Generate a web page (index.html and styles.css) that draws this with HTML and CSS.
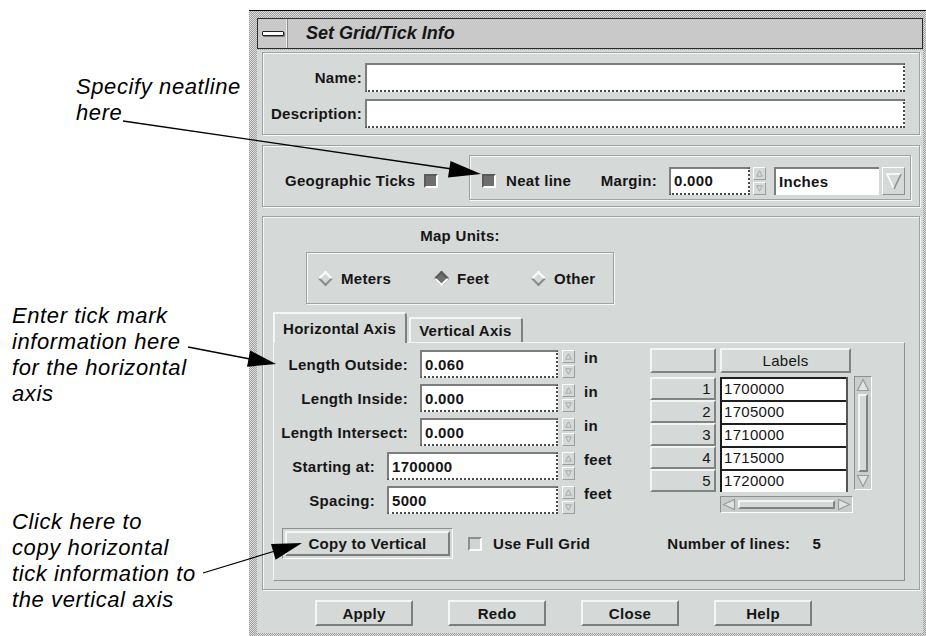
FILE: index.html
```html
<!DOCTYPE html>
<html lang="en">
  <head>
    <meta charset="UTF-8" />
    <title>Set Grid/Tick Info</title>
    <link rel="stylesheet" href="styles.css">
  </head>
  <body>
    <div class="page">
      <div class="notes">
        <p class="note note-neat">Specify neatline<br />here</p>
        <p class="note note-tick">
          Enter tick mark<br />information here<br />for the horizontal<br />axis
        </p>
        <p class="note note-copy">
          Click here to<br />copy horizontal<br />tick information to<br />the vertical axis
        </p>
      </div>

      <div class="window">
        <div class="titlebar">
          <span class="menu-btn"><span class="menu-bar"></span></span>
          <span class="title">Set Grid/Tick Info</span>
        </div>

        <div class="client">
          <div class="panel names">
            <div class="field-row">
              <span class="lbl">Name:</span>
              <span class="text-field"></span>
            </div>
            <div class="field-row">
              <span class="lbl">Description:</span>
              <span class="text-field"></span>
            </div>
          </div>

          <div class="panel ticks">
            <div class="geo">
              <span>Geographic Ticks</span>
              <span class="check on"></span>
            </div>
            <div class="etched neat-box">
              <span class="check on"></span>
              <span class="neat-lbl">Neat line</span>
              <span class="margin-lbl">Margin:</span>
              <span class="text-field margin-field">0.000</span>
              <span class="spin">
                <span class="spin-btn"><svg width="7" height="7" viewBox="0 0 7 7"><path class="spin-tri" d="M3.5 0.8 L6.3 6.2 H0.7 Z" /></svg></span>
                <span class="spin-btn"><svg width="7" height="7" viewBox="0 0 7 7"><path class="spin-tri" d="M0.7 0.8 H6.3 L3.5 6.2 Z" /></svg></span>
              </span>
              <span class="combo">
                <span class="combo-field">Inches</span>
                <span class="combo-arrow">
                  <svg width="18" height="22" viewBox="0 0 18 22">
                    <path d="M9 19 L2 4 H16" fill="none" stroke="#ffffff" stroke-width="1.6" />
                    <path d="M16 4 L9 19" fill="none" stroke="#8d918f" stroke-width="1.6" />
                  </svg>
                </span>
              </span>
            </div>
          </div>

          <div class="panel axes">
            <div class="units">
              <div class="units-title">Map Units:</div>
              <div class="etched radio-box">
                <span class="radio radio-meters"><span class="dia-wrap"><span class="diamond"></span></span>Meters</span>
                <span class="radio radio-feet"><span class="dia-wrap"><span class="diamond on"></span></span>Feet</span>
                <span class="radio"><span class="dia-wrap"><span class="diamond"></span></span>Other</span>
              </div>
            </div>

            <div class="tabs">
              <span class="tab active">Horizontal Axis</span>
              <span class="tab">Vertical Axis</span>
            </div>

            <div class="tab-page">
              <div class="tab-top">
                <div class="form">
                  <div class="form-row">
                    <span class="lbl lbl-a">Length Outside:</span>
                    <span class="text-field in-a">0.060</span>
                    <span class="spin">
                      <span class="spin-btn"><svg width="7" height="7" viewBox="0 0 7 7"><path class="spin-tri" d="M3.5 0.8 L6.3 6.2 H0.7 Z" /></svg></span>
                      <span class="spin-btn"><svg width="7" height="7" viewBox="0 0 7 7"><path class="spin-tri" d="M0.7 0.8 H6.3 L3.5 6.2 Z" /></svg></span>
                    </span>
                    <span class="unit">in</span>
                  </div>
                  <div class="form-row">
                    <span class="lbl lbl-a">Length Inside:</span>
                    <span class="text-field in-a">0.000</span>
                    <span class="spin">
                      <span class="spin-btn"><svg width="7" height="7" viewBox="0 0 7 7"><path class="spin-tri" d="M3.5 0.8 L6.3 6.2 H0.7 Z" /></svg></span>
                      <span class="spin-btn"><svg width="7" height="7" viewBox="0 0 7 7"><path class="spin-tri" d="M0.7 0.8 H6.3 L3.5 6.2 Z" /></svg></span>
                    </span>
                    <span class="unit">in</span>
                  </div>
                  <div class="form-row">
                    <span class="lbl lbl-a">Length Intersect:</span>
                    <span class="text-field in-a">0.000</span>
                    <span class="spin">
                      <span class="spin-btn"><svg width="7" height="7" viewBox="0 0 7 7"><path class="spin-tri" d="M3.5 0.8 L6.3 6.2 H0.7 Z" /></svg></span>
                      <span class="spin-btn"><svg width="7" height="7" viewBox="0 0 7 7"><path class="spin-tri" d="M0.7 0.8 H6.3 L3.5 6.2 Z" /></svg></span>
                    </span>
                    <span class="unit">in</span>
                  </div>
                  <div class="form-row">
                    <span class="lbl lbl-b">Starting at:</span>
                    <span class="text-field in-b">1700000</span>
                    <span class="spin">
                      <span class="spin-btn"><svg width="7" height="7" viewBox="0 0 7 7"><path class="spin-tri" d="M3.5 0.8 L6.3 6.2 H0.7 Z" /></svg></span>
                      <span class="spin-btn"><svg width="7" height="7" viewBox="0 0 7 7"><path class="spin-tri" d="M0.7 0.8 H6.3 L3.5 6.2 Z" /></svg></span>
                    </span>
                    <span class="unit">feet</span>
                  </div>
                  <div class="form-row">
                    <span class="lbl lbl-b">Spacing:</span>
                    <span class="text-field in-b">5000</span>
                    <span class="spin">
                      <span class="spin-btn"><svg width="7" height="7" viewBox="0 0 7 7"><path class="spin-tri" d="M3.5 0.8 L6.3 6.2 H0.7 Z" /></svg></span>
                      <span class="spin-btn"><svg width="7" height="7" viewBox="0 0 7 7"><path class="spin-tri" d="M0.7 0.8 H6.3 L3.5 6.2 Z" /></svg></span>
                    </span>
                    <span class="unit">feet</span>
                  </div>
                </div>

                <div class="table">
                  <div class="table-head">
                    <span class="raised-cell corner"></span>
                    <span class="raised-cell col-head">Labels</span>
                  </div>
                  <div class="table-body">
                    <div class="row-heads">
                      <span class="raised-cell row-head">1</span>
                      <span class="raised-cell row-head">2</span>
                      <span class="raised-cell row-head">3</span>
                      <span class="raised-cell row-head">4</span>
                      <span class="raised-cell row-head">5</span>
                    </div>
                    <div class="cells">
                      <span class="cell">1700000</span>
                      <span class="cell">1705000</span>
                      <span class="cell">1710000</span>
                      <span class="cell">1715000</span>
                      <span class="cell">1720000</span>
                    </div>
                    <div class="vscroll">
                      <span class="sb-arrow"><svg width="14" height="14" viewBox="0 0 14 14"><path class="sb-tri" d="M7 1.5 L12.5 12.5 H1.5 Z" /></svg></span>
                      <span class="sb-thumb"></span>
                      <span class="sb-arrow"><svg width="14" height="14" viewBox="0 0 14 14"><path class="sb-tri" d="M1.5 1.5 H12.5 L7 12.5 Z" /></svg></span>
                    </div>
                  </div>
                  <div class="hscroll">
                    <span class="sb-arrow"><svg width="14" height="13" viewBox="0 0 14 13"><path class="sb-tri" d="M1.5 6.5 L12.5 1.5 V11.5 Z" /></svg></span>
                    <span class="sb-thumb"></span>
                    <span class="sb-arrow"><svg width="14" height="13" viewBox="0 0 14 13"><path class="sb-tri" d="M12.5 6.5 L1.5 1.5 V11.5 Z" /></svg></span>
                  </div>
                </div>
              </div>

              <div class="tab-bottom">
                <span class="default-frame"><span class="btn copy-btn">Copy to Vertical</span></span>
                <span class="check full-check"></span>
                <span class="full-lbl">Use Full Grid</span>
                <span class="num-lbl">Number of lines:</span>
                <span class="num-val">5</span>
              </div>
            </div>
          </div>

          <div class="actions">
            <span class="btn">Apply</span>
            <span class="btn">Redo</span>
            <span class="btn">Close</span>
            <span class="btn">Help</span>
          </div>
        </div>
      </div>

      <svg class="arrows" width="926" height="636" viewBox="0 0 926 636">
        <line x1="123" y1="121" x2="452" y2="169" stroke="#000" stroke-width="1.3" />
        <polygon points="481,174 448,177.5 450.5,161" />
        <line x1="188" y1="347" x2="250" y2="359" stroke="#000" stroke-width="1.3" />
        <polygon points="276,364 247,366.8 250.2,350.6" />
        <line x1="203" y1="573" x2="275" y2="551" stroke="#000" stroke-width="1.3" />
        <polygon points="302,543 275.6,559.8 271,544" />
      </svg>
    </div>
  </body>
</html>
```

FILE: styles.css
```css
html,
body {
  margin: 0;
  height: 100%;
}

body {
  background: #fff;
  color: #151515;
  font: bold 15px "Liberation Sans", Arial, sans-serif;
  letter-spacing: 0.3px;
  overflow: hidden;
}

.page {
  position: relative;
  display: flex;
  width: 926px;
  height: 636px;
  overflow: hidden;
}

/* callouts on the left */

.notes {
  flex: none;
  width: 249px;
  display: flex;
  flex-direction: column;
}

.note {
  margin: 0;
  color: #000;
  font: italic 22px/26px "Liberation Sans", Arial, sans-serif;
  letter-spacing: 0.6px;
}

.note-neat {
  margin-top: 74px;
  padding-left: 76px;
}

.note-tick {
  margin-top: 177px;
  padding-left: 12px;
}

.note-copy {
  margin-top: 102px;
  padding-left: 12px;
}

.arrows {
  position: absolute;
  left: 0;
  top: 0;
  pointer-events: none;
}

/* window frame */

.window {
  flex: none;
  align-self: flex-start;
  box-sizing: border-box;
  width: 681px;
  height: 626px;
  margin-top: 10px;
  padding: 7px 7px 0 8px;
  border-top: 1px solid #000;
  background: repeating-conic-gradient(#a0a0a0 0 25%, #dcdcdc 0 50%) 0 0 / 2px 2px;
}

.titlebar {
  display: flex;
  align-items: center;
  box-sizing: border-box;
  height: 31px;
  border: 1px solid #2b2b2b;
  background: #c9c9c9;
}

.menu-btn {
  display: flex;
  align-items: center;
  justify-content: center;
  width: 30px;
  height: 100%;
  box-sizing: border-box;
  border-right: 1px solid #8c8c8c;
  box-shadow: inset -1px 0 0 #ececec;
}

.menu-bar {
  width: 20px;
  height: 3px;
  border: 1px solid #222;
  border-radius: 1px;
  background: #fff;
  box-shadow: 1px 1px 0 #7a7a7a;
}

.title {
  margin-left: 18px;
  font: italic bold 18px "Liberation Sans", Arial, sans-serif;
  letter-spacing: 0;
}

.client {
  display: flex;
  flex-direction: column;
  box-sizing: border-box;
  height: 583px;
  margin-top: 1px;
  padding: 2px 3px 0 5px;
  background: #d5d9d7;
}

/* shared bits */

.panel,
.etched {
  box-sizing: border-box;
  border: 1px solid #9ea2a0;
  box-shadow: inset 1px 1px 0 #f6f8f7, 1px 1px 0 #f6f8f7;
}

.text-field {
  display: flex;
  align-items: center;
  box-sizing: border-box;
  height: 100%;
  padding: 0 3px;
  background: #fff;
  border-width: 2px;
  border-style: solid dotted dotted solid;
  border-color: #7d7d7d #4a4a4a #4a4a4a #7d7d7d;
}

.check {
  flex: none;
  box-sizing: border-box;
  width: 14px;
  height: 14px;
  border: 2px solid;
  border-color: #8a8e8c #fbfbfb #fbfbfb #8a8e8c;
  background: #d0d4d2;
}

.check.on {
  border-color: #5a5a5a #fff #fff #5a5a5a;
  background: #6e6e6e;
}

.spin {
  flex: none;
  display: flex;
  flex-direction: column;
  justify-content: space-between;
  width: 13px;
  height: 28px;
  margin-left: 4px;
}

.spin-btn {
  display: flex;
  align-items: center;
  justify-content: center;
  box-sizing: border-box;
  height: 13px;
  border: 1px solid;
  border-color: #fff #9a9e9c #9a9e9c #fff;
}

.spin-tri {
  fill: none;
  stroke: #a6aaa8;
  stroke-width: 1;
}

.btn {
  display: flex;
  align-items: center;
  justify-content: center;
  box-sizing: border-box;
  width: 98px;
  height: 26px;
  border: 2px solid;
  border-color: #f5f7f6 #7a7e7c #7a7e7c #f5f7f6;
  background: #d5d9d7;
}

.raised-cell {
  box-sizing: border-box;
  border: 2px solid;
  border-color: #f3f5f4 #7f8381 #7f8381 #f3f5f4;
  background: #d5d9d7;
}

/* name / description */

.names {
  display: flex;
  flex-direction: column;
  gap: 7px;
  height: 83px;
  padding: 10px 14px 6px 0;
}

.field-row {
  display: flex;
  align-items: center;
  gap: 3px;
  height: 29px;
}

.field-row .lbl {
  width: 99px;
  text-align: right;
}

.field-row .text-field {
  flex: 1;
}

/* ticks and neat line */

.ticks {
  display: flex;
  height: 62px;
  margin-top: 10px;
  padding: 9px 8px 6px 22px;
}

.geo {
  flex: none;
  display: flex;
  align-items: center;
  gap: 9px;
  width: 184px;
  padding-top: 6px;
}

.neat-box {
  flex: 1;
  display: flex;
  align-items: center;
  padding: 8px 5px 2px 12px;
}

.neat-lbl {
  margin-left: 10px;
}

.margin-lbl {
  margin-left: auto;
}

.margin-field {
  width: 81px;
  height: 28px;
  margin-left: 12px;
}

.neat-box .spin {
  margin-left: 3px;
}

.combo {
  display: flex;
  gap: 3px;
  height: 28px;
  margin-left: 8px;
}

.combo-field {
  display: flex;
  align-items: center;
  box-sizing: border-box;
  width: 105px;
  padding-left: 3px;
  border-top: 2px solid #7d7d7d;
  border-left: 2px solid #7d7d7d;
  background: #fff;
}

.combo-arrow {
  display: flex;
  align-items: center;
  justify-content: center;
  box-sizing: border-box;
  width: 23px;
  border: 1px solid;
  border-color: #fff #8d918f #8d918f #fff;
}

/* axes panel */

.axes {
  display: flex;
  flex-direction: column;
  height: 374px;
  margin-top: 9px;
  padding: 0 14px 8px 10px;
}

.units {
  align-self: flex-start;
  width: 308px;
  margin-left: 33px;
}

.units-title {
  margin-bottom: 7px;
  padding-top: 10px;
  line-height: 18px;
  text-align: center;
}

.radio-box {
  display: flex;
  align-items: center;
  height: 52px;
  padding-left: 10px;
}

.radio {
  display: flex;
  align-items: center;
  gap: 8px;
}

.radio-meters {
  width: 116px;
}

.radio-feet {
  width: 97px;
}

.dia-wrap {
  display: flex;
  align-items: center;
  justify-content: center;
  width: 16px;
  height: 16px;
}

.diamond {
  box-sizing: border-box;
  width: 11px;
  height: 11px;
  border: 2px solid;
  border-color: #fff #8a8a8a #8a8a8a #fff;
  background: #d5d9d7;
  transform: rotate(45deg);
}

.diamond.on {
  border-color: #5a5a5a #fff #fff #5a5a5a;
  background: #6e6e6e;
}

.tabs {
  display: flex;
  align-items: flex-end;
  height: 30px;
  margin-top: 8px;
}

.tab {
  display: flex;
  align-items: center;
  box-sizing: border-box;
  height: 25px;
  margin-left: 2px;
  padding: 0 9px 0 8px;
  border: 2px solid;
  border-bottom: none;
  border-color: #f4f6f5 #7d817f #7d817f #f4f6f5;
  border-top-right-radius: 4px;
  background: #d5d9d7;
  white-space: nowrap;
}

.tab.active {
  position: relative;
  z-index: 1;
  height: 31px;
  margin: 0 0 -1px;
  padding: 0 9px 0 8px;
}

.tab-page {
  display: flex;
  flex-direction: column;
  box-sizing: border-box;
  height: 239px;
  padding-top: 7px;
  border: 1px solid;
  border-color: #f4f6f5 #8d918f #8d918f #f4f6f5;
}

.tab-top {
  display: flex;
}

.form {
  flex: none;
  display: flex;
  flex-direction: column;
  gap: 6px;
  width: 376px;
}

.form-row {
  display: flex;
  height: 28px;
}

.form-row .lbl {
  align-self: center;
  text-align: right;
}

.lbl-a {
  width: 134px;
}

.lbl-b {
  width: 101px;
}

.form-row .text-field {
  margin-left: 12px;
}

.in-a {
  width: 138px;
}

.in-b {
  width: 171px;
}

.unit {
  margin-left: 9px;
  line-height: 15px;
}

/* labels table */

.table {
  margin-top: -2px;
  font-weight: normal;
}

.table-head {
  display: flex;
  gap: 4px;
  height: 25px;
}

.corner {
  width: 66px;
}

.col-head {
  width: 131px;
  line-height: 21px;
  text-align: center;
}

.table-body {
  display: flex;
  margin-top: 4px;
}

.row-heads {
  display: flex;
  flex-direction: column;
  width: 66px;
}

.row-head {
  height: 23px;
  padding-right: 3px;
  line-height: 19px;
  text-align: right;
}

.cells {
  display: flex;
  flex-direction: column;
  box-sizing: border-box;
  width: 128px;
  margin-left: 4px;
  border-left: 2px solid #1a1a1a;
  border-right: 2px solid #555;
  background: #fff;
}

.cell {
  box-sizing: border-box;
  height: 23px;
  padding-left: 2px;
  border-top: 2px solid #1f1f1f;
  line-height: 20px;
}

.vscroll,
.hscroll {
  display: flex;
  box-sizing: border-box;
  padding: 1px;
  border: 1px solid;
  border-color: #8d918f #fff #fff #8d918f;
  background: #c9cdcb;
}

.vscroll {
  flex-direction: column;
  width: 18px;
  height: 114px;
  margin: -1px 0 0 6px;
}

.hscroll {
  width: 133px;
  height: 17px;
  margin: 4px 0 0 70px;
}

.sb-arrow {
  display: flex;
  align-items: center;
  justify-content: center;
}

.sb-tri {
  fill: #e1e4e3;
  stroke: #989c9a;
  stroke-width: 1.2;
}

.sb-thumb {
  flex: 1;
  box-sizing: border-box;
  margin: 2px;
  border: 2px solid;
  border-color: #f3f5f4 #7f8381 #7f8381 #f3f5f4;
  background: #d5d9d7;
}

/* bottom of tab page */

.tab-bottom {
  display: flex;
  align-items: center;
  height: 31px;
  margin-top: 14px;
  padding-left: 8px;
}

.default-frame {
  display: flex;
  box-sizing: border-box;
  height: 31px;
  padding: 2px;
  border: 1px solid;
  border-color: #8d918f #fff #fff #8d918f;
}

.copy-btn {
  width: 165px;
  height: 25px;
}

.full-check {
  margin-left: 15px;
}

.full-lbl {
  margin-left: 11px;
}

.num-lbl {
  margin-left: 77px;
}

.num-val {
  margin-left: 22px;
}

/* dialog buttons */

.actions {
  display: flex;
  gap: 35px;
  margin-top: 10px;
  padding-left: 53px;
}
```
